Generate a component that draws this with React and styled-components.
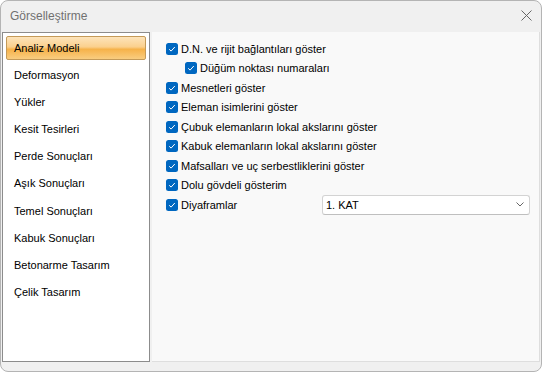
import React from 'react';
import styled, { createGlobalStyle } from 'styled-components';

const Global = createGlobalStyle`
  html, body { margin: 0; padding: 0; background: #ffffff; }
  body { font-family: "Liberation Sans", Arial, sans-serif; }
`;

const Window = styled.div`
  width: 542px;
  height: 372px;
  box-sizing: border-box;
  border: 1px solid #b4b4b4;
  border-radius: 8px;
  background: #f0f0f0;
  display: flex;
  flex-direction: column;
  overflow: hidden;
`;

const TitleBar = styled.div`
  height: 31px;
  flex-shrink: 0;
  display: flex;
  align-items: center;
  justify-content: space-between;
  padding: 0 9px 2px 9px;
  box-sizing: border-box;
  font-size: 12px;
  color: #707070;
`;

const Body = styled.div`
  flex: 1;
  display: flex;
  gap: 2px;
  padding: 0 1px 9px 1px;
`;

const Nav = styled.ul`
  width: 148px;
  box-sizing: border-box;
  margin: 0;
  padding: 3px;
  list-style: none;
  background: #ffffff;
  border: 1px solid #8c8c8c;
  display: flex;
  flex-direction: column;
  gap: 3.1px;
`;

const NavItem = styled.li`
  height: 24px;
  flex-shrink: 0;
  box-sizing: border-box;
  display: flex;
  align-items: center;
  padding-left: 7px;
  font-size: 11px;
  color: #000;
  border: 1px solid ${p => (p.$active ? '#c49a58' : 'transparent')};
  border-radius: 2px;
  background: ${p =>
    p.$active
      ? 'linear-gradient(to bottom, #fde4bb 0%, #fbd08d 45%, #f6b24a 56%, #f9cd80 100%)'
      : 'transparent'};
`;

const Content = styled.div`
  flex: 1;
  box-sizing: border-box;
  background: #f9f9f9;
  border-right: 1px solid #dedede;
  border-bottom: 1px solid #dedede;
  padding: 7px 9px 0 14px;
  display: flex;
  flex-direction: column;
`;

const Row = styled.label`
  height: 19.5px;
  flex-shrink: 0;
  display: flex;
  align-items: center;
  gap: 3px;
  padding-left: ${p => (p.$indent ? '19px' : '0')};
  font-size: 11px;
  color: #000;
`;

const Box = styled.span`
  width: 12px;
  height: 12px;
  border-radius: 2.5px;
  background: #0067c0;
  display: inline-flex;
  align-items: center;
  justify-content: center;
  flex-shrink: 0;
`;

const Select = styled.div`
  margin-left: auto;
  width: 208px;
  height: 20px;
  box-sizing: border-box;
  background: #fff;
  border: 1px solid #d3d3d3;
  border-bottom-color: #bfbfbf;
  border-radius: 3px;
  display: flex;
  align-items: center;
  justify-content: space-between;
  padding: 0 5px 0 3px;
  font-size: 11px;
`;

const Check = () => (
  <Box>
    <svg width="8" height="8" viewBox="0 0 8 8">
      <path d="M1.2 4.3 L3.1 6.1 L6.8 2" fill="none" stroke="#fff" strokeWidth="1" />
    </svg>
  </Box>
);

const navItems = [
  'Analiz Modeli',
  'Deformasyon',
  'Yükler',
  'Kesit Tesirleri',
  'Perde Sonuçları',
  'Aşık Sonuçları',
  'Temel Sonuçları',
  'Kabuk Sonuçları',
  'Betonarme Tasarım',
  'Çelik Tasarım',
];

const options = [
  { text: 'D.N. ve rijit bağlantıları göster' },
  { text: 'Düğüm noktası numaraları', indent: true },
  { text: 'Mesnetleri göster' },
  { text: 'Eleman isimlerini göster' },
  { text: 'Çubuk elemanların lokal akslarını göster' },
  { text: 'Kabuk elemanların lokal akslarını göster' },
  { text: 'Mafsalları ve uç serbestliklerini göster' },
  { text: 'Dolu gövdeli gösterim' },
];

const App = () => (
  <>
    <Global />
    <Window>
      <TitleBar>
        <span>Görselleştirme</span>
        <svg width="11" height="11" viewBox="0 0 11 11">
          <path d="M0.5 0.5 L10.5 10.5 M10.5 0.5 L0.5 10.5" stroke="#666" strokeWidth="1" />
        </svg>
      </TitleBar>
      <Body>
        <Nav>
          {navItems.map((n, i) => (
            <NavItem key={n} $active={i === 0}>{n}</NavItem>
          ))}
        </Nav>
        <Content>
          {options.map(o => (
            <Row key={o.text} $indent={o.indent}>
              <Check />
              {o.text}
            </Row>
          ))}
          <Row>
            <Check />
            Diyaframlar
            <Select>
              <span>1. KAT</span>
              <svg width="8" height="5" viewBox="0 0 8 5">
                <path d="M0.5 0.5 L4 4 L7.5 0.5" fill="none" stroke="#666" strokeWidth="1" />
              </svg>
            </Select>
          </Row>
        </Content>
      </Body>
    </Window>
  </>
);

export default App;
